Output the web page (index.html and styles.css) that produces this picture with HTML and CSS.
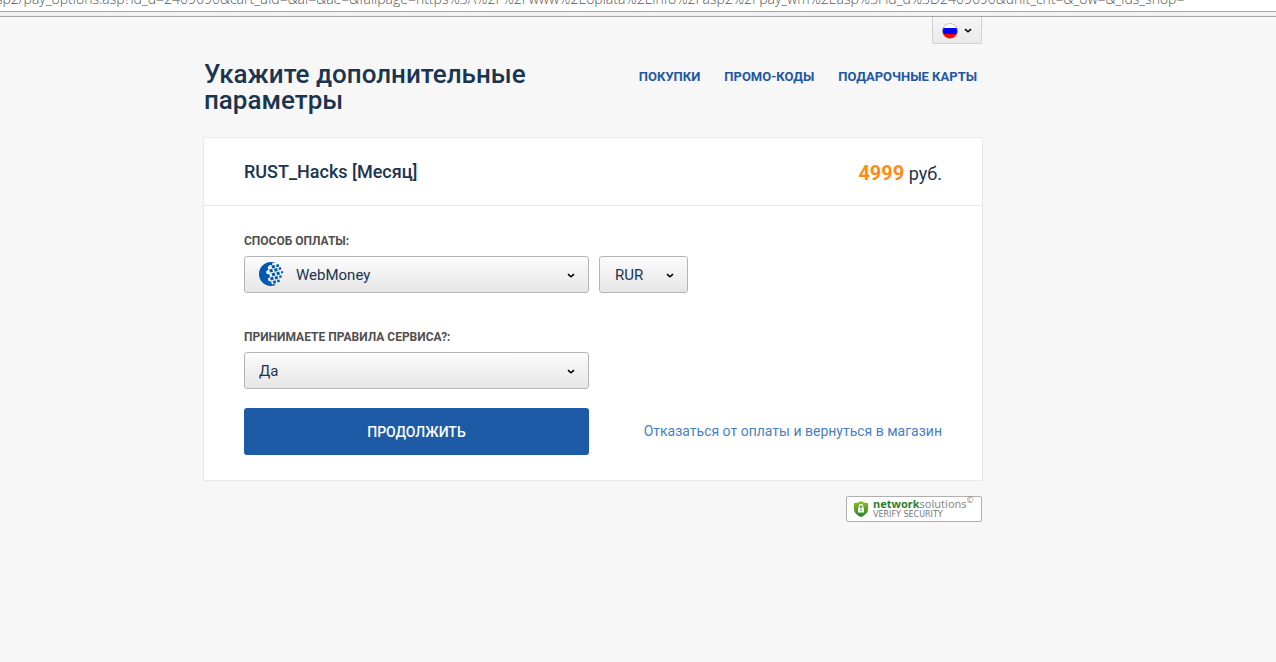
FILE: index.html
```
<!DOCTYPE html>
<html lang="ru">
<head>
    <meta charset="UTF-8">
    <meta name="viewport" content="width=device-width, initial-scale=1.0">
    <title>Укажите дополнительные параметры</title>
    <link rel="stylesheet" href="styles.css">
</head>
<body>

<div class="address-bar">
    <input class="address" type="text" aria-label="Адрес" value="sp2/pay_options.asp?id_d=2409690&amp;cart_uid=&amp;ai=&amp;ae=&amp;failpage=https%3A%2F%2Fwww%2Eoplata%2Einfo%2Fasp2%2Fpay_wm%2Easp%3Fid_d%3D2409690&amp;unit_cnt=&amp;_ow=&amp;_ids_shop=">
</div>
<div class="toolbar-edge"></div>

<div class="container">
    <div class="lang-row">
        <button class="lang" type="button" aria-label="Русский">
            <svg width="16" height="16" viewBox="0 0 16 16">
                <clipPath id="flagClip"><circle cx="8" cy="8" r="7.5"/></clipPath>
                <g clip-path="url(#flagClip)">
                    <path fill="#fff" d="M0 0h16v5H0z"/>
                    <path fill="#00f" d="M0 5h16v6H0z"/>
                    <path fill="#f00" d="M0 11h16v5H0z"/>
                </g>
                <circle cx="8" cy="8" r="7.5" fill="none" stroke="#99a" stroke-width=".6"/>
            </svg>
            <svg width="8" height="6" viewBox="0 0 8 6"><path d="M1 1.2l3 2.6 3-2.6" fill="none" stroke="#000" stroke-width="1.6"/></svg>
        </button>
    </div>

    <header class="header">
        <h1>Укажите дополнительные параметры</h1>
        <nav class="nav">
            <a href="#">ПОКУПКИ</a>
            <a href="#">ПРОМО-КОДЫ</a>
            <a href="#">ПОДАРОЧНЫЕ КАРТЫ</a>
        </nav>
    </header>

    <main class="card">
        <div class="product">
            <h2>RUST_Hacks [Месяц]</h2>
            <p class="price"><strong>4999</strong> руб.</p>
        </div>
        <form class="form">
            <div class="form-group">
                <label for="payMethod">СПОСОБ ОПЛАТЫ:</label>
                <div class="select-row">
                    <div class="select select-wide select-logo">
                        <select id="payMethod" name="payMethod">
                            <option>WebMoney</option>
                        </select>
                        <svg class="wm-logo" width="26" height="26" viewBox="0 0 26 26">
                            <g fill="#0059b3">
                                <path d="M17.500 1.900A12 12 0 1 0 17.500 24.100L16.500 23 14 23.500 13 20.500 10.500 20 9.800 17.200 12 16.200 11.300 13.300 8.600 13 8 10.200 10.300 9 9.600 6.600 11.300 4.300 14 4 14.500 2z"/>
                                <path d="M13.400 4.500l3-.8.8 3-3 .8zM18 3.700l2.600-.7.7 2.600-2.600.7z"/>
                                <path d="M11.200 8.500l3-.8.8 3-3 .8zM16 7.700l3-.8.8 3-3 .8zM20.500 6.700l2.300-.6.6 2.300-2.300.6z"/>
                                <path d="M13.600 12.200l3-.8.8 3-3 .8zM18.300 11.300l2.900-.8.8 2.900-2.900.8zM22.800 10.500l2-.5.5 2-2 .5z"/>
                                <path d="M12.100 16.500l2.900-.8.8 2.900-2.900.8zM16.500 15.700l2.900-.8.8 2.900-2.900.8zM21 14.800l2.300-.6.6 2.300-2.300.6z"/>
                                <path d="M14.800 20l2.700-.7.7 2.700-2.700.7zM19 19l2.400-.6.6 2.400-2.400.6z"/>
                            </g>
                        </svg>
                        <svg class="chevron" width="8" height="6" viewBox="0 0 8 6"><path d="M1 1.2l3 2.6 3-2.6" fill="none" stroke="#000" stroke-width="1.6"/></svg>
                    </div>
                    <div class="select">
                        <select id="currency" name="currency" aria-label="Валюта">
                            <option>RUR</option>
                        </select>
                        <svg class="chevron" width="8" height="6" viewBox="0 0 8 6"><path d="M1 1.2l3 2.6 3-2.6" fill="none" stroke="#000" stroke-width="1.6"/></svg>
                    </div>
                </div>
            </div>
            <div class="form-group">
                <label for="rules">ПРИНИМАЕТЕ ПРАВИЛА СЕРВИСА?:</label>
                <div class="select select-wide">
                    <select id="rules" name="rules">
                        <option>Да</option>
                        <option>Нет</option>
                    </select>
                    <svg class="chevron" width="8" height="6" viewBox="0 0 8 6"><path d="M1 1.2l3 2.6 3-2.6" fill="none" stroke="#000" stroke-width="1.6"/></svg>
                </div>
            </div>
            <div class="actions">
                <button class="submit" type="submit">ПРОДОЛЖИТЬ</button>
                <a class="cancel" href="#">Отказаться от оплаты и вернуться в магазин</a>
            </div>
        </form>
    </main>

    <footer class="footer">
        <a class="seal" href="#">
            <svg width="16" height="18" viewBox="0 0 16 18">
                <defs>
                    <linearGradient id="shield" x1="0" y1="0" x2="0" y2="1">
                        <stop offset="0" stop-color="#8fc31f"/>
                        <stop offset="1" stop-color="#23802f"/>
                    </linearGradient>
                </defs>
                <path fill="url(#shield)" d="M8 1c2 1.500 4.500 2 7 2v6c0 4-3.500 6.500-7 8-3.500-1.500-7-4-7-8V3c2.500 0 5-.5 7-2z"/>
                <path fill="#fff" d="M5 8h6v4.500H5z"/>
                <path fill="none" stroke="#fff" stroke-width="1.200" d="M6.200 8V6.500a1.800 1.800 0 0 1 3.600 0V8"/>
                <path fill="#4a982a" d="M7.500 9.300h1v2h-1z"/>
            </svg>
            <span class="seal-text">
                <span class="seal-name"><b>network</b>solutions<sup>©</sup></span>
                <span class="seal-note">VERIFY SECURITY</span>
            </span>
        </a>
    </footer>
</div>

</body>
</html>
```
FILE: styles.css
```
* {
    box-sizing: border-box;
}
body {
    margin: 0;
    background-color: #f7f7f7;
    color: #1b3450;
    font-family: Roboto, Arial, sans-serif;
}
a {
    text-decoration: none;
}
.address-bar {
    display: flex;
    align-items: flex-end;
    height: 11px;
    overflow: hidden;
    background-color: #fff;
}
.address {
    flex: 1;
    height: 26px;
    padding: 0;
    border: 0;
    background: none;
    color: #555;
    font: 300 14px "Open Sans", sans-serif;
    text-indent: -4px;
}
.toolbar-edge {
    height: 6px;
    border-top: 1px solid #a5a8a6;
    border-bottom: 1px solid #a5a8a6;
    background-color: #f2f2f2;
}
.container {
    max-width: 780px;
    margin-left: calc(50% - 435px);
}
.lang-row {
    display: flex;
    justify-content: flex-end;
    padding-right: 1px;
}
.lang {
    display: flex;
    align-items: center;
    gap: 6px;
    height: 27px;
    padding: 2px 9px 0;
    border: 1px solid #d0d0d0;
    border-top: 0;
    border-radius: 0 0 2px 2px;
    background: linear-gradient(#f7f7f7, #e9e9e9);
}
.header {
    display: flex;
    justify-content: space-between;
    padding: 17px 6px 24px 1px;
}
h1 {
    flex: 0 1 360px;
    margin: 0;
    font-size: 26px;
    font-weight: 500;
    line-height: 26px;
}
.nav {
    display: flex;
    gap: 24px;
    padding-top: 8px;
}
.nav a {
    color: #1f57a0;
    font-size: 13px;
    font-weight: 700;
    line-height: 16px;
}
.card {
    border: 1px solid #e9e9e9;
    background-color: #fff;
}
.product {
    display: flex;
    justify-content: space-between;
    align-items: center;
    height: 68px;
    padding: 0 40px;
    border-bottom: 1px solid #e9e9e9;
}
h2 {
    margin: 0;
    font-size: 18px;
    font-weight: 500;
}
.price {
    margin: 0;
    padding-top: 2px;
    font-size: 18px;
}
.price strong {
    color: #ff8a15;
    font-size: 20px;
}
.form {
    padding: 28px 40px 25px;
}
.form-group {
    margin-bottom: 37px;
}
.form-group + .form-group {
    margin-bottom: 19px;
}
.form-group label {
    display: block;
    margin-bottom: 7px;
    color: #505050;
    font-size: 12px;
    font-weight: 700;
    line-height: 15px;
}
.select-row {
    display: flex;
    gap: 10px;
}
.select {
    position: relative;
    width: 89px;
}
.select-wide {
    width: 345px;
}
.select select {
    display: block;
    width: 100%;
    height: 37px;
    padding: 0 15px;
    appearance: none;
    border: 1px solid #b4b4b4;
    border-radius: 3px;
    background: linear-gradient(#fcfcfc, #e6e6e6);
    color: #1b3450;
    font: 15px Roboto, Arial, sans-serif;
}
.select-wide select {
    padding-left: 14px;
}
.select-logo select {
    padding-left: 51px;
}
.chevron {
    position: absolute;
    top: 17px;
    right: 14px;
    pointer-events: none;
}
.wm-logo {
    position: absolute;
    top: 5px;
    left: 14px;
    pointer-events: none;
}
.actions {
    display: flex;
    justify-content: space-between;
    align-items: center;
}
.submit {
    width: 345px;
    height: 47px;
    border: 0;
    border-radius: 3px;
    background-color: #1d5ba6;
    color: #fff;
    font: 500 14px Roboto, Arial, sans-serif;
    cursor: pointer;
}
.cancel {
    padding-bottom: 2px;
    color: #4a7fc1;
    font-size: 14px;
}
.footer {
    display: flex;
    justify-content: flex-end;
    padding: 15px 1px 0 0;
}
.seal {
    display: flex;
    align-items: center;
    gap: 4px;
    width: 136px;
    height: 26px;
    padding-left: 6px;
    border: 1px solid #b0b0b0;
    border-radius: 2px;
    background-color: #fff;
    white-space: nowrap;
}
.seal-text {
    display: flex;
    flex-direction: column;
}
.seal-name {
    color: #8a8a8a;
    font: 11px/12px "Noto Sans", sans-serif;
}
.seal-name b {
    color: #2e7d32;
}
.seal-name sup {
    font-size: 8px;
    line-height: 1px;
}
.seal-note {
    color: #777;
    font: 8px/10px "DejaVu Sans", sans-serif;
}
```
